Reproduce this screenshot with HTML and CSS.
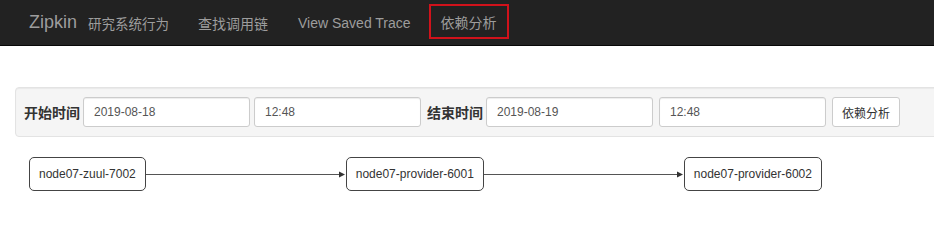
FILE: index.html
```html
<!DOCTYPE html>
<html lang="zh">
<head>
<meta charset="utf-8">
<title>Zipkin 依赖分析</title>
<link rel="stylesheet" href="styles.css">
</head>
<body>
<nav class="navbar">
  <a class="brand">Zipkin</a>
  <span class="brand-sub">研究系统行为</span>
  <a class="nav-link">查找调用链</a>
  <a class="nav-link">View Saved Trace</a>
  <a class="nav-link active">依赖分析</a>
</nav>

<div class="well">
  <label class="form-label">开始时间</label>
  <input class="form-input" type="text" value="2019-08-18">
  <input class="form-input gap-s" type="text" value="12:48">
  <label class="form-label gap-m">结束时间</label>
  <input class="form-input" type="text" value="2019-08-19">
  <input class="form-input gap-m" type="text" value="12:48">
  <button class="btn gap-m">依赖分析</button>
</div>

<div class="graph">
  <div class="node">node07-zuul-7002</div>
  <svg class="edge" width="200" height="34" viewBox="0 0 200 34">
    <line x1="0" y1="17.5" x2="194" y2="17.5" class="edge-line"/>
    <polygon points="193,14.5 199,17.5 193,20.5" class="edge-head"/>
  </svg>
  <div class="node">node07-provider-6001</div>
  <svg class="edge" width="200" height="34" viewBox="0 0 200 34">
    <line x1="0" y1="17.5" x2="194" y2="17.5" class="edge-line"/>
    <polygon points="193,14.5 199,17.5 193,20.5" class="edge-head"/>
  </svg>
  <div class="node">node07-provider-6002</div>
</div>
</body>
</html>
```

FILE: styles.css
```css
html, body {
  margin: 0;
  padding: 0;
  background: #fff;
  overflow: hidden;
}

body {
  font-family: "Liberation Sans", "Noto Sans CJK SC", sans-serif;
  font-size: 14px;
  color: #333;
}

.navbar {
  display: flex;
  align-items: center;
  height: 45px;
  border-bottom: 1px solid #080808;
  background: #222;
  padding-left: 29px;
  box-sizing: content-box;
}

.brand {
  font-size: 18px;
  color: #9d9d9d;
  margin-right: 11px;
}

.brand-sub {
  font-size: 13.5px;
  color: #9d9d9d;
  margin-right: 14px;
}

.nav-link {
  color: #9d9d9d;
  font-size: 14px;
  padding: 0 15px;
}

.nav-link.active {
  align-self: flex-start;
  margin-top: 4px;
  margin-left: 3px;
  height: 35px;
  box-sizing: border-box;
  display: flex;
  align-items: center;
  padding: 0 10px 0 10px;
  border: 2px solid #d0121b;
}

.well {
  display: flex;
  align-items: center;
  margin: 41px 0 0 15px;
  width: 940px;
  padding: 9px 9px 9px 8px;
  border: 1px solid #e3e3e3;
  border-radius: 4px;
  background: #f5f5f5;
  box-shadow: inset 0 1px 1px rgba(0,0,0,0.05);
}

.form-label {
  font-weight: bold;
  font-size: 14px;
  color: #333;
  margin-right: 3px;
}

.form-input {
  width: 167px;
  height: 30px;
  box-sizing: border-box;
  padding: 0 10px;
  border: 1px solid #ccc;
  border-radius: 3px;
  background: #fff;
  font-family: "Liberation Sans", "Noto Sans CJK SC", sans-serif;
  font-size: 12px;
  color: #555;
  margin: 0;
  box-shadow: inset 0 1px 1px rgba(0,0,0,0.075);
}

.gap-s { margin-left: 4px; }
.gap-m { margin-left: 6px; }

.btn {
  height: 30px;
  box-sizing: border-box;
  padding: 0 9px;
  border: 1px solid #ccc;
  border-radius: 3px;
  background: #fff;
  font-family: "Liberation Sans", "Noto Sans CJK SC", sans-serif;
  font-size: 12px;
  color: #333;
}

.graph {
  display: flex;
  align-items: center;
  margin: 20px 0 0 29px;
}

.node {
  height: 34px;
  box-sizing: border-box;
  padding: 0 9px;
  display: flex;
  align-items: center;
  border: 1px solid #444;
  border-radius: 5px;
  font-size: 12px;
  color: #333;
  background: #fff;
  white-space: nowrap;
}

.edge {
  display: block;
  flex: none;
}

.edge-line {
  stroke: #555;
  stroke-width: 1;
}

.edge-head {
  fill: #333;
}
```
